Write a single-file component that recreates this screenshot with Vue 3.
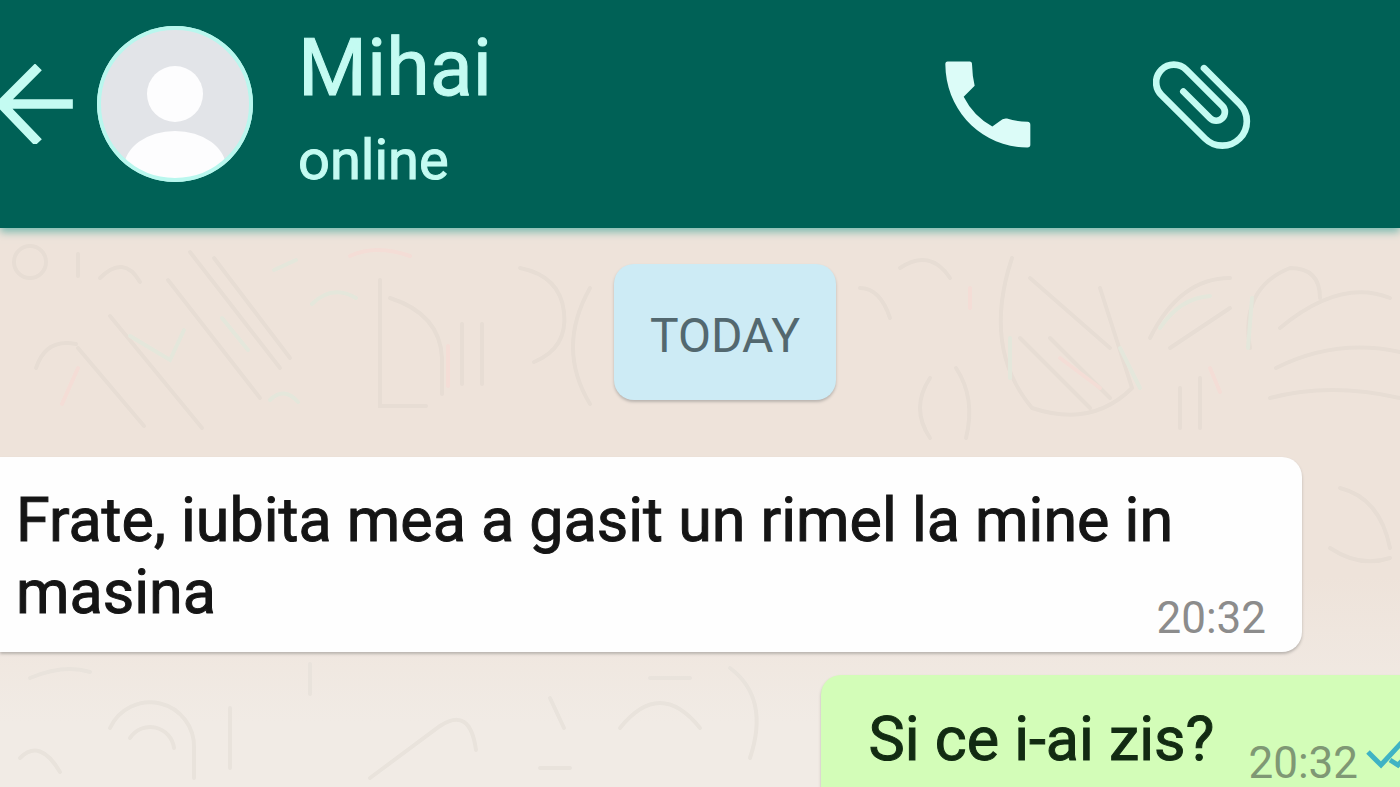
<template>
    <div class="app">
        <header class="header">
            <button type="button" class="icon-button back" aria-label="Back">
                <svg class="arrow" viewBox="0 195 222 240" aria-hidden="true">
                    <path d="M204 315H12M105 214L4 315L105 420" />
                </svg>
            </button>
            <svg class="avatar" viewBox="0 0 156 156" aria-hidden="true">
                <defs>
                    <clipPath id="avatar-clip"><circle cx="78" cy="78" r="76" /></clipPath>
                </defs>
                <circle cx="78" cy="78" r="78" fill="#b5f5ec" />
                <circle cx="78" cy="78" r="75" fill="#e2e4e8" />
                <g clip-path="url(#avatar-clip)" fill="#fdfdfe">
                    <circle cx="78" cy="68" r="28" />
                    <ellipse cx="78" cy="142" rx="51" ry="37" />
                </g>
                <circle cx="78" cy="78" r="76" fill="none" stroke="#b9f7ee" stroke-width="4" />
            </svg>
            <div class="contact">
                <h1>{{ contact.name }}</h1>
                <p>{{ contact.status }}</p>
            </div>
            <div class="actions">
                <button type="button" class="icon-button" aria-label="Call">
                    <svg class="phone" viewBox="74 92 258 260" aria-hidden="true">
                        <path d="M82 93H148Q155 93 155 101Q156 137 163 166L130 199Q160 258 216 288L238 272Q248 262 260 264Q290 273 322 274Q330 275 330 283V343Q330 351 321 351C184 350 76 240 75 101Q75 93 82 93Z" />
                    </svg>
                </button>
                <button type="button" class="icon-button" aria-label="Attach">
                    <svg class="clip" viewBox="699 88 294 266" aria-hidden="true">
                        <path d="M852 112L959 219A73 73 0 0 1 855 323L724 192A53 53 0 0 1 799 117L907 225A26 26 0 0 1 870 262L790 182" />
                    </svg>
                </button>
            </div>
        </header>

        <main class="chat">
            <svg class="doodles" aria-hidden="true">
                <defs>
                    <pattern id="doodle" width="1400" height="600" patternUnits="userSpaceOnUse">
                        <g fill="none" stroke-width="4" stroke-linecap="round">
                            <g stroke="#e7ddd4">
                                <circle cx="30" cy="34" r="16" />
                                <path d="M78 26v22M100 50q24-24 40 4M36 140q10-30 40-24" />
                                <path d="M190 24l90 116M168 52l92 118M110 88l92 112M78 120l66 78M214 30l76 100" />
                                <path d="M380 52v126h46M390 70q50 16 52 60v36M462 96v60M482 96v60" />
                                <path d="M520 40q40 8 44 44t-30 50M590 60q-34 60 0 116" />
                                <path d="M1012 30q-30 90 20 150q60 20 100-20L1100 60M1030 50l80 70M1020 110l70 70M1050 110l60 60" />
                                <path d="M1150 110q30-60 80-60M1170 120l60-40M1250 120q-10-60 40-80q30 0 30 30" />
                                <path d="M1280 100q60-50 110-30M1276 140q60-30 124-16M1270 170q60-16 130 0M1180 160v40M1200 150v50" />
                                <path d="M860 60q20 0 30 30M900 40q30-20 50 10M930 150q-20 30 0 60M956 140q20 30 10 70" />
                                <path d="M1340 260q40 10 50 60M1330 320q30 20 60 10" />
                            </g>
                            <g stroke="#e9e3dc">
                                <path d="M30 450q34-14 60-6M110 500a44 44 0 0 1 84 20v30M130 510a24 24 0 0 1 44 10" />
                                <path d="M370 550l70-52q30-20 36 24M310 436v30M230 480v60M550 470l14 30M620 500q40-50 80 0" />
                                <path d="M540 540h30M650 450h40M730 440q40 30 20 90M20 530q20-20 40 14" />
                            </g>
                            <g stroke="#e4e7db">
                                <path d="M130 108l40 24 14-30M222 90l26 32M274 42l22-10" />
                                <path d="M312 76q20-20 44-6M270 172q14-14 28 2M1160 100q20-30 50-32M1252 70l-4 50" />
                                <path d="M1010 110v40M1120 120l20 40" />
                            </g>
                            <g stroke="#f4ddd6">
                                <path d="M350 28q26-12 60 0M62 176l16-36M448 118v40M1210 140l10 24" />
                                <path d="M1060 130l40 30M970 60v20" />
                            </g>
                        </g>
                    </pattern>
                </defs>
                <rect width="100%" height="100%" fill="url(#doodle)" />
            </svg>
            <p class="day">TODAY</p>
            <article
                v-for="message in messages"
                :key="message.id"
                class="message"
                :class="message.sent ? 'sent' : 'received'"
            >
                <p class="text">{{ message.text }}</p>
                <div class="meta">
                    <time>{{ message.time }}</time>
                    <svg v-if="message.sent" class="checks" viewBox="0 0 62 40" aria-label="Read">
                        <path d="M2 15L15 28L39 2M24 23L32 28L58 2" />
                    </svg>
                </div>
            </article>
        </main>
    </div>
</template>

<script setup>
import { ref } from 'vue';

const contact = ref({
    name: 'Mihai',
    status: 'online',
});

const messages = ref([
    { id: 1, text: 'Frate, iubita mea a gasit un rimel la mine in masina', time: '20:32', sent: false },
    { id: 2, text: 'Si ce i-ai zis?', time: '20:32', sent: true },
]);
</script>

<style>
body {
    margin: 0;
    background-color: #eee4db;
}
</style>

<style scoped>
.app {
    height: 100vh;
    display: flex;
    flex-direction: column;
    overflow: hidden;
    font-family: Roboto, sans-serif;
}

h1,
p {
    margin: 0;
    font-weight: 400;
}

.header {
    display: flex;
    align-items: center;
    padding: 12px 149px 32px 0;
    background-color: #006156;
    box-shadow: 0 4px 8px #7dbab0;
    color: #c4fbf2;
    z-index: 1;
}

.icon-button {
    display: flex;
    padding: 0;
    border: none;
    background: none;
    color: inherit;
    cursor: pointer;
}

.back {
    margin-right: 23px;
}

.arrow {
    width: 74px;
    height: 80px;
}

.arrow path {
    fill: none;
    stroke: currentColor;
    stroke-width: 29;
    stroke-linecap: square;
}

.avatar {
    width: 156px;
    height: 156px;
    margin-right: 45px;
}

.contact {
    display: flex;
    flex-direction: column;
    flex: 1;
    -webkit-text-stroke: 1px currentColor;
}

.contact h1 {
    font-size: 79px;
    line-height: 112px;
}

.contact p {
    font-size: 56px;
    line-height: 72px;
}

.actions {
    display: flex;
    align-items: center;
    gap: 122px;
}

.phone {
    width: 86px;
    height: 87px;
    fill: #dcfcf8;
}

.clip {
    width: 98px;
    height: 89px;
}

.clip path {
    fill: none;
    stroke: currentColor;
    stroke-width: 20;
    stroke-linecap: round;
}

.chat {
    position: relative;
    display: flex;
    flex: 1;
    flex-direction: column;
    align-items: flex-start;
    padding-top: 36px;
    background: linear-gradient(#eee3da 60%, #f1ebe5 85%);
}

.doodles {
    position: absolute;
    inset: 0;
    width: 100%;
    height: 100%;
}

.day,
.message {
    position: relative;
    box-shadow: 0 2px 3px #b9b3ae;
}

.day {
    align-self: center;
    margin-left: 50px;
    margin-bottom: 57px;
    padding: 40px 36px 32px;
    border-radius: 20px;
    background-color: #cdebf5;
    color: #53686f;
    font-size: 48px;
    line-height: 64px;
}

.message {
    display: flex;
    align-items: flex-end;
    color: #151515;
}

.text {
    font-size: 61px;
    line-height: 72px;
    -webkit-text-stroke: 1px currentColor;
}

.meta {
    display: flex;
    align-items: flex-start;
    gap: 8px;
    color: #8c8c8c;
    font-size: 44px;
    line-height: 52px;
}

.received {
    width: 93%;
    box-sizing: border-box;
    justify-content: space-between;
    margin-bottom: 23px;
    padding: 27px 36px 8px 16px;
    border-radius: 0 20px 20px 0;
    background-color: #fefefe;
}

/* the first line may run above the time */
.received .text {
    flex: 1;
    margin-right: -36px;
    padding-bottom: 16px;
}

.sent {
    align-self: flex-end;
    gap: 34px;
    margin-right: -36px;
    padding: 28px 8px 20px 48px;
    border-radius: 20px 0 0 20px;
    background-color: #d3fdb8;
    color: #122b12;
    white-space: nowrap;
}

.sent .text {
    padding-bottom: 14px;
}

.sent .meta {
    color: #7f9874;
}

.checks {
    width: 62px;
    height: 40px;
}

.checks path {
    fill: none;
    stroke: #3fb3c4;
    stroke-width: 5;
}
</style>
